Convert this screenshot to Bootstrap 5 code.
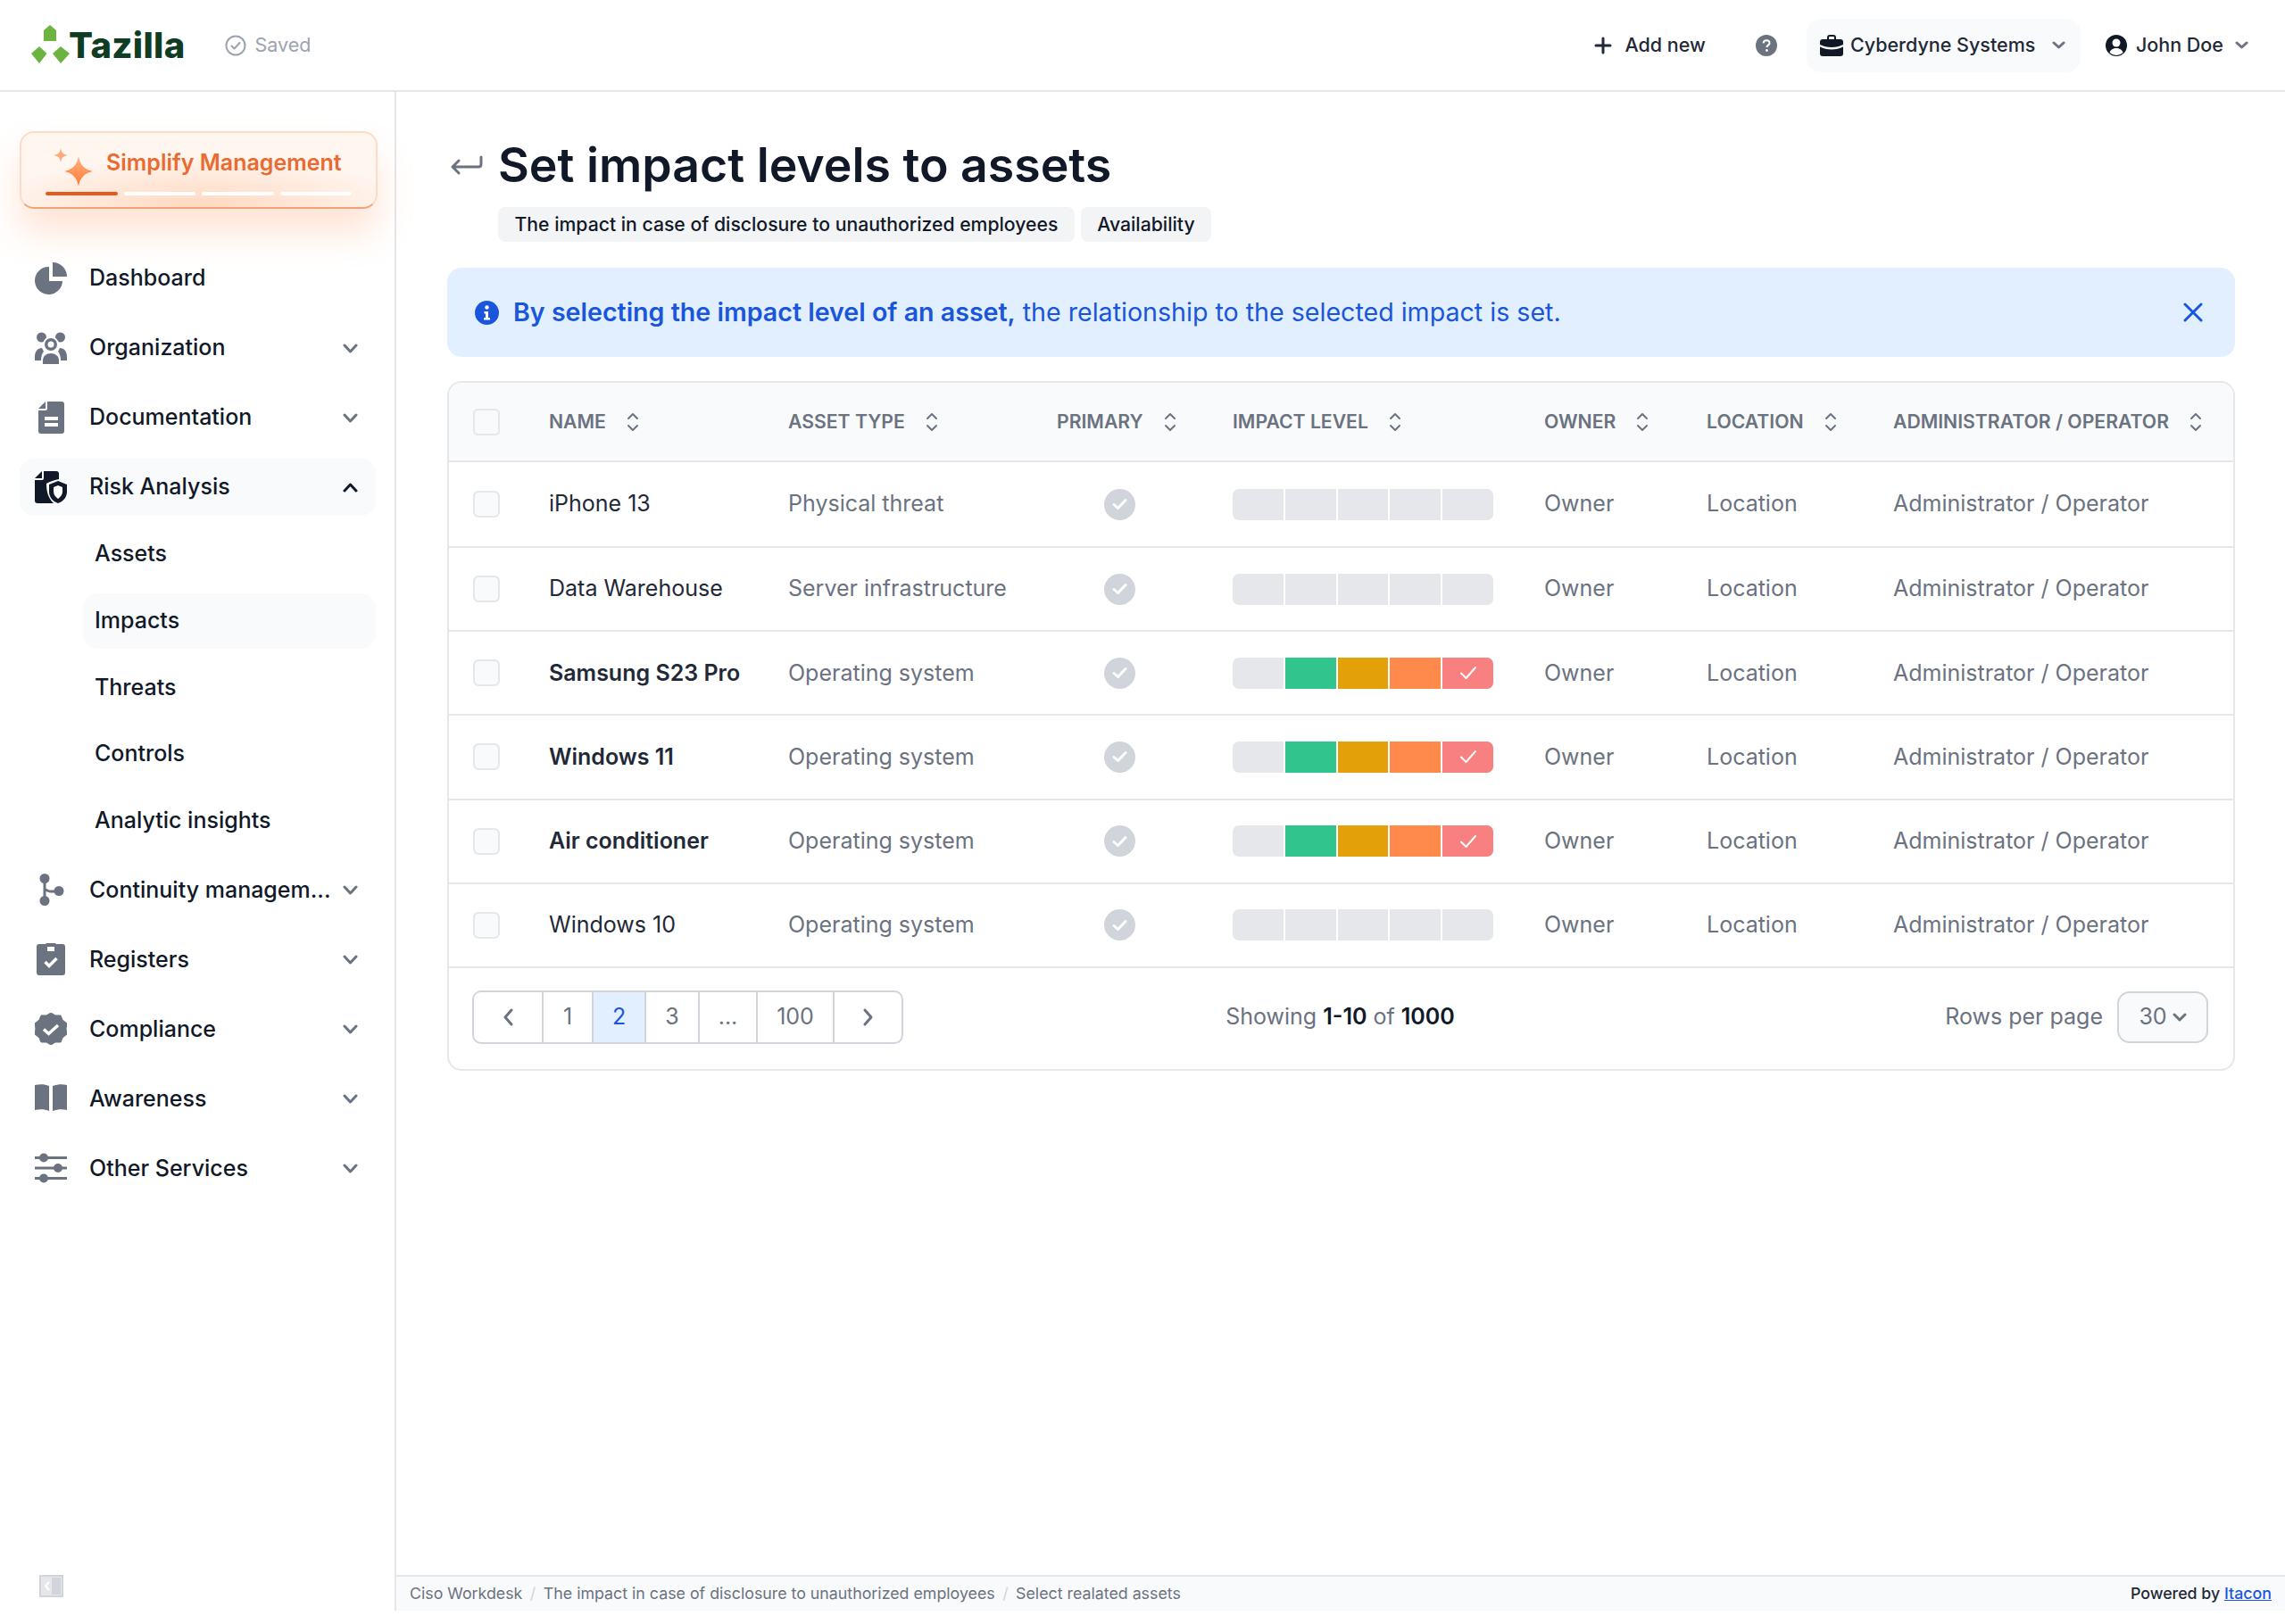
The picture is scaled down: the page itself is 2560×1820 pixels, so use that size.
<!DOCTYPE html>
<html lang="en">
<head>
    <meta charset="UTF-8">
    <meta name="viewport" content="width=device-width, initial-scale=1.0">
    <title>Set impact levels to assets</title>
    <link rel="stylesheet" href="https://cdn.jsdelivr.net/npm/bootstrap@5.3.0/dist/css/bootstrap.min.css">
    <style>
        html, body { background: #fff; }
        body { font-family: "Inter", "Liberation Sans", sans-serif; color: #111928; font-size: 25px; }
        .app-shell { height: 1805px; }

        /* top bar */
        .top-bar { height: 103px; border-bottom: 2px solid #e5e7eb; padding: 0 41px 0 35px; flex-shrink: 0; }
        .brand-logo { width: 43px; height: 43px; margin-bottom: 2px; }
        .brand-name { font-size: 40px; font-weight: 800; color: #0f3d24; letter-spacing: .3px; line-height: 1; margin-left: -1px; }
        .saved-state { color: #9ca3af; font-size: 21.5px; margin-left: 44px; gap: 10px; }
        .top-action { font-size: 21.5px; font-weight: 500; color: #1f2937; white-space: nowrap; }
        .add-plus { margin-right: 14px; }
        .company-pill { background: #f9fafb; border-radius: 16px; height: 60px; padding: 0 17px 0 15px; width: 307px; margin-left: 33px; }
        .user-menu { margin-left: 28px; }
        .user-name { margin-left: 10px; margin-right: 13px; }

        /* sidebar */
        .side-bar { width: 444px; flex-shrink: 0; border-right: 2px solid #e5e7eb; padding: 44px 21px 15px 22px; }
        .promo-box { height: 87px; border-radius: 16px; border: 2px solid #fbdcc8; border-bottom-color: #f0a47a; margin-right: -2px;
            background: radial-gradient(ellipse 60% 70% at 50% 100%, #ffd8c0 0%, rgba(255, 240, 230, 0) 100%), #fff6f0;
            box-shadow: 0 26px 40px rgba(255, 138, 76, .24); padding: 12px 27px 0; margin-bottom: 46px; flex-shrink: 0; }
        .promo-title { color: #ea6a2f; font-weight: 600; font-size: 25px; line-height: 38px; gap: 14px; padding-left: 8px; }
        .promo-title svg { margin-top: 4px; margin-bottom: -6px; }
        .promo-steps { gap: 7px; margin-top: 12px; }
        .promo-steps span { height: 4px; flex: 1; background: #fff; border-radius: 2px; }
        .promo-steps span.on { background: #e8591f; }
        .side-link { height: 64px; margin-bottom: 14px; padding: 0 20px 0 17px; border-radius: 16px; color: #111928; font-weight: 500; font-size: 25px; gap: 25px; flex-shrink: 0; }
        .side-link:hover, .side-link:focus { color: #111928; }
        .side-link.open { background: #f9fafb; margin-bottom: 12px; }
        .side-icon { width: 36px; height: 36px; flex-shrink: 0; fill: #6b7280; }
        .side-link.open .side-icon { fill: #111928; }
        .side-text { flex: 1; min-width: 0; white-space: nowrap; }
        .side-sub { margin-left: 71px; margin-bottom: 2px; }
        .side-sub a { height: 62px; margin-bottom: 12.7px; padding: 0 13px; border-radius: 16px; color: #111928; font-weight: 500; font-size: 25px; display: flex; align-items: center; text-decoration: none; }
        .side-sub a.current { background: #f9fafb; }
        .chev { stroke: #6b7280; fill: none; stroke-width: 3; stroke-linecap: round; stroke-linejoin: round; flex-shrink: 0; }

        /* page head */
        .page-body { padding: 52px 56px 0 57px; }
        .back-arrow { width: 36px; height: 24px; margin-top: 18px; margin-left: 4px; margin-right: 17px; }
        .page-title { font-size: 53.6px; font-weight: 600; line-height: 60px; color: #111928; margin: 0; }
        .tag-row { margin: 17px 0 29px 57px; gap: 7px; }
        .tag-chip { height: 39px; padding: 0 18.500px; border-radius: 8px; background: #f3f4f6; color: #111928; font-size: 21.2px; font-weight: 500; display: flex; align-items: center; }

        /* notice */
        .notice { height: 100px; background: #e1effe; border: 0; border-radius: 16px; color: #1a56db; font-size: 28.6px; margin-bottom: 27px; padding: 0 36px 0 31px; gap: 16px; }
        .notice b { font-weight: 600; }

        /* table */
        .asset-box { border: 2px solid #e5e7eb; border-radius: 16px; overflow: hidden; }
        .asset-table { table-layout: fixed; margin: 0; width: 2002px; --bs-table-color: #6b7280; }
        .asset-table th { height: 88px; background: #f9fafb; font-size: 21.2px; font-weight: 600; color: #6b7280; text-transform: uppercase; padding: 0 0 0 27px; vertical-align: middle; border-bottom: 2px solid #e5e7eb; white-space: nowrap; }
        .asset-table td { height: 94.2px; font-size: 25px; color: #6b7280; padding: 0 0 0 27px; vertical-align: middle; border-bottom: 2px solid #e5e7eb; }
        .asset-table tbody tr:first-child td { height: 96px; }
        .asset-table td.item-name { color: #1f2937; }
        .asset-table td.item-name.strong { font-weight: 600; }
        .sort-mark { width: 14px; height: 22px; margin-left: 23px; vertical-align: -4px; }
        .tick-box { width: 30px; height: 30px; margin: 0; background-color: #f9fafb; border: 2px solid #e5e7eb; border-radius: 6px; display: block; }
        .primary-dot { width: 35px; height: 35px; border-radius: 50%; background: #d1d5db; margin-left: 53px; }
        .level-bar { width: 292px; height: 35px; gap: 2px; border-radius: 7px; overflow: hidden; }
        .level-bar span { flex: 1; background: #e5e7eb; }
        .level-bar .lv-green { background: #31c48d; }
        .level-bar .lv-amber { background: #e3a008; }
        .level-bar .lv-orange { background: #ff8a4c; }
        .level-bar .lv-red { background: #f98080; }

        /* table foot */
        .table-foot { padding: 25px 28px 28px 26px; }
        .pager { margin: 0; }
        .pager .page-link { height: 60px; display: flex; align-items: center; justify-content: center; padding: 0; font-size: 25px; color: #6b7280; border: 2px solid #d1d5db; background: #fff; }
        .pager .page-item:not(:first-child) .page-link { margin-left: -2px; }
        .pager .page-item:first-child .page-link { border-radius: 10px 0 0 10px; margin-left: 0; }
        .pager .page-item:last-child .page-link { border-radius: 0 10px 10px 0; }
        .pager .page-item.active .page-link { background: #e1effe; color: #1a56db; }
        .foot-info { color: #6b7280; font-size: 25px; }
        .foot-info b { color: #111928; font-weight: 600; }
        .rows-select { width: 102px; height: 58px; border: 2px solid #d1d5db; border-radius: 14px; background: #f9fafb; color: #6b7280; font-size: 25px; gap: 6px; margin-left: 16px; }

        /* status line */
        .status-line { height: 40px; border-top: 2px solid #e5e7eb; background: #f9fafb; padding: 0 15px 0 15px; font-size: 17.8px; flex-shrink: 0; }
        .status-line .breadcrumb { --bs-breadcrumb-margin-bottom: 0; --bs-breadcrumb-divider-color: #d1d5db; --bs-breadcrumb-item-padding-x: 8.5px; color: #6b7280; }
        .status-line .breadcrumb-item { color: #6b7280; }
        .status-line .powered { color: #1f2937; font-weight: 500; }
        .status-line a { color: #1a56db; }
    </style>
</head>
<body>
<div class="app-shell d-flex flex-column">

    <!-- top bar -->
    <header class="top-bar d-flex align-items-center">
        <svg class="brand-logo" viewBox="0 0 43 43">
            <path fill="#6cb33f" d="M21 0l7 6v12h-14V6z M9 24l8.500 8-8.500 11-9-11z M33 24l10 8-10 11-9-11z"/>
        </svg>
        <span class="brand-name">Tazilla</span>
        <span class="saved-state d-flex align-items-center">
            <svg width="24" height="24" viewBox="0 0 24 24" fill="none" stroke="#9ca3af" stroke-width="2"><circle cx="12" cy="12" r="10.500"/><path d="M7.500 12.500l3 3 6-6.500" stroke-linecap="round" stroke-linejoin="round"/></svg>
            Saved
        </span>
        <div class="ms-auto d-flex align-items-center top-action">
            <svg class="add-plus" width="20" height="20" viewBox="0 0 20 20" stroke="#1f2937" stroke-width="3" stroke-linecap="round"><path d="M10 2v16M2 10h16"/></svg>
            <span class="me-5 pe-2">Add new</span>
            <svg width="24" height="24" viewBox="0 0 24 24"><circle cx="12" cy="12" r="12" fill="#6b7280"/><path d="M8.600 9.300c.2-2 1.700-3 3.500-3 1.900 0 3.400 1.100 3.400 2.900 0 2.400-3.100 2.500-3.100 4.900" fill="none" stroke="#fff" stroke-width="2"/><circle cx="12.400" cy="17.500" r="1.400" fill="#fff"/></svg>
            <div class="company-pill d-flex align-items-center">
                <svg width="26" height="24" viewBox="0 0 26 24" fill="#111928"><path d="M8 5V3a3 3 0 0 1 3-3h4a3 3 0 0 1 3 3v2h5a3 3 0 0 1 3 3v3c-4 2-8 3-13 3S4 13 0 11V8a3 3 0 0 1 3-3zM10 3v2h6V3a1 1 0 0 0-1-1h-4a1 1 0 0 0-1 1z"/><path d="M0 13.500c4 2 8 3 13 3s9-1 13-3V21a3 3 0 0 1-3 3H3a3 3 0 0 1-3-3z"/></svg>
                <span class="ms-2 flex-grow-1">Cyberdyne Systems</span>
                <svg class="chev" width="15" height="9" viewBox="0 0 15 9" stroke-width="2"><path d="M2 2l5.500 5L13 2"/></svg>
            </div>
            <div class="user-menu d-flex align-items-center">
                <svg width="24" height="24" viewBox="0 0 24 24"><circle cx="12" cy="12" r="12" fill="#111928"/><circle cx="12" cy="9" r="4.500" fill="#fff"/><path d="M4.500 20c1-3.500 4-5 7.500-5s6.500 1.500 7.500 5a11 11 0 0 1-15 0z" fill="#fff"/></svg>
                <span class="user-name">John Doe</span>
                <svg class="chev" width="15" height="9" viewBox="0 0 15 9" stroke-width="2"><path d="M2 2l5.500 5L13 2"/></svg>
            </div>
        </div>
    </header>

    <div class="d-flex flex-grow-1" style="min-height:0">
        <!-- sidebar -->
        <aside class="side-bar d-flex flex-column">
            <div class="promo-box">
                <div class="promo-title d-flex align-items-center">
                    <svg width="46" height="44" viewBox="0 0 46 44">
                        <defs><linearGradient id="promo-star" x1="0" y1="0" x2="0" y2="1"><stop offset="0" stop-color="#ffb183"/><stop offset="1" stop-color="#ff7a33"/></linearGradient></defs>
                        <path fill="url(#promo-star)" d="M29 10c1.500 9 6 15 16 17-10 2-14.500 8-16 17-1.500-9-6-15-16-17 10-2 14.500-8 16-17z"/>
                        <path fill="#fbab7c" d="M9 1c1 5 2 7 8 8-6 1-7 3-8 8-1-5-2-7-8-8 6-1 7-3 8-8z"/>
                    </svg>
                    <span>Simplify Management</span>
                </div>
                <div class="promo-steps d-flex"><span class="on"></span><span></span><span></span><span></span></div>
            </div>

            <nav class="nav flex-column flex-nowrap w-100">
                <a class="side-link nav-link d-flex align-items-center" href="#">
                    <svg class="side-icon" viewBox="0 0 36 36"><path d="M16 5A15.500 15.500 0 1 0 31 21H16z"/><path d="M20 0a16 16 0 0 1 16 16H20z"/></svg>
                    <span class="side-text">Dashboard</span>
                </a>
                <a class="side-link nav-link d-flex align-items-center" href="#">
                    <svg class="side-icon" viewBox="0 0 36 36"><circle cx="7.500" cy="6" r="5.500"/><circle cx="28.500" cy="6" r="5.500"/><circle cx="18" cy="14" r="8" stroke="#fff" stroke-width="2"/><circle cx="18" cy="14" r="3.500" fill="#fff"/><path d="M0 28c0-6 3-10 8-10l2 4c-2 2-3 6-3 10H0z"/><path d="M36 28c0-6-3-10-8-10l-2 4c2 2 3 6 3 10h7z"/><path d="M9 36v-4c0-5 4-8 9-8s9 3 9 8v4z"/></svg>
                    <span class="side-text">Organization</span>
                    <svg class="chev" width="17" height="11" viewBox="0 0 17 11"><path d="M2 2l6.500 7L15 2"/></svg>
                </a>
                <a class="side-link nav-link d-flex align-items-center" href="#">
                    <svg class="side-icon" viewBox="0 0 36 36"><path d="M4 8l8-8v8z"/><path d="M14 0h16a3 3 0 0 1 3 3v30a3 3 0 0 1-3 3H7a3 3 0 0 1-3-3V10h8a2 2 0 0 0 2-2z"/><rect x="11" y="17" width="15" height="4" fill="#fff"/><rect x="11" y="24" width="15" height="4" fill="#fff"/></svg>
                    <span class="side-text">Documentation</span>
                    <svg class="chev" width="17" height="11" viewBox="0 0 17 11"><path d="M2 2l6.500 7L15 2"/></svg>
                </a>
                <a class="side-link open nav-link d-flex align-items-center" href="#">
                    <svg class="side-icon" viewBox="0 0 36 36"><path d="M0 8l8-8v8z"/><path d="M10 0h14a3 3 0 0 1 3 3v6c-6 1-11 3-14 5 0 9 2 16 8 22H3a3 3 0 0 1-3-3V10h8a2 2 0 0 0 2-2z"/><path d="M26 11l10 4v8c0 6-4 11-10 13-6-2-10-7-10-13v-8z"/><path d="M26 16l5 2v5c0 3-2 6-5 8-3-2-5-5-5-8v-5z" fill="#fff"/></svg>
                    <span class="side-text">Risk Analysis</span>
                    <svg class="chev" width="17" height="11" viewBox="0 0 17 11" style="stroke:#111928"><path d="M2 9l6.500-7L15 9"/></svg>
                </a>
                <div class="side-sub">
                    <a href="#">Assets</a>
                    <a href="#" class="current">Impacts</a>
                    <a href="#">Threats</a>
                    <a href="#">Controls</a>
                    <a href="#">Analytic insights</a>
                </div>
                <a class="side-link nav-link d-flex align-items-center" href="#">
                    <svg class="side-icon" viewBox="0 0 36 36"><path d="M11 5v26M11 18c2 0 4 2 6 2h10" fill="none" stroke="#6b7280" stroke-width="3"/><circle cx="11" cy="5.500" r="5.500"/><circle cx="11" cy="30.500" r="5.500"/><circle cx="27" cy="19.500" r="5.500"/></svg>
                    <span class="side-text">Continuity managem...</span>
                    <svg class="chev" width="17" height="11" viewBox="0 0 17 11"><path d="M2 2l6.500 7L15 2"/></svg>
                </a>
                <a class="side-link nav-link d-flex align-items-center" href="#">
                    <svg class="side-icon" viewBox="0 0 36 36"><path d="M5 1h7a2 2 0 0 1 2-1h8a2 2 0 0 1 2 1h7a3 3 0 0 1 3 3v29a3 3 0 0 1-3 3H5a3 3 0 0 1-3-3V4a3 3 0 0 1 3-3z"/><rect x="14" y="4" width="8" height="5" fill="#fff"/><path d="M11.500 21l4.500 4.500 8.500-8.500" fill="none" stroke="#fff" stroke-width="3.500"/></svg>
                    <span class="side-text">Registers</span>
                    <svg class="chev" width="17" height="11" viewBox="0 0 17 11"><path d="M2 2l6.500 7L15 2"/></svg>
                </a>
                <a class="side-link nav-link d-flex align-items-center" href="#">
                    <svg class="side-icon" viewBox="0 0 36 36"><path d="M18 0l5 3 6 0 2 5 5 4-1 6 1 6-5 4-2 5-6 0-5 3-5-3-6 0-2-5-5-4 1-6-1-6 5-4 2-5 6 0z" stroke="#6b7280" stroke-width="1" stroke-linejoin="round"/><path d="M10 18.500l5.500 5L26 14" fill="none" stroke="#fff" stroke-width="3.500"/></svg>
                    <span class="side-text">Compliance</span>
                    <svg class="chev" width="17" height="11" viewBox="0 0 17 11"><path d="M2 2l6.500 7L15 2"/></svg>
                </a>
                <a class="side-link nav-link d-flex align-items-center" href="#">
                    <svg class="side-icon" viewBox="0 0 36 36"><path d="M0 3c6-1 11-1 16 1v28c-5-2-10-2-16-1z"/><path d="M36 3c-5-1-10-1-16 1v28c6-2 11-2 16-1z"/></svg>
                    <span class="side-text">Awareness</span>
                    <svg class="chev" width="17" height="11" viewBox="0 0 17 11"><path d="M2 2l6.500 7L15 2"/></svg>
                </a>
                <a class="side-link nav-link d-flex align-items-center" href="#">
                    <svg class="side-icon" viewBox="0 0 36 36"><rect y="5" width="36" height="3"/><rect y="16.500" width="36" height="3"/><rect y="28" width="36" height="3"/><circle cx="10" cy="6.500" r="5"/><circle cx="26" cy="18" r="5"/><circle cx="10" cy="29.500" r="5"/></svg>
                    <span class="side-text">Other Services</span>
                    <svg class="chev" width="17" height="11" viewBox="0 0 17 11"><path d="M2 2l6.500 7L15 2"/></svg>
                </a>
            </nav>

            <svg class="mt-auto flex-shrink-0" style="margin-left:22px" width="27" height="25" viewBox="0 0 27 25"><rect x="1" y="1" width="25" height="23" fill="#e5e7eb" stroke="#d1d5db" stroke-width="2"/><rect x="14" y="3" width="10" height="19" fill="#d1d5db"/><path d="M11 8l-4 4.500 4 4.500" fill="none" stroke="#fff" stroke-width="2"/></svg>
        </aside>

        <!-- main -->
        <main class="d-flex flex-column flex-grow-1" style="min-width:0">
            <div class="page-body flex-grow-1">
                <div class="d-flex align-items-start">
                    <svg class="back-arrow" viewBox="0 0 36 24" fill="none" stroke="#6b7280" stroke-width="3" stroke-linecap="round" stroke-linejoin="round"><path d="M34 3v8c0 2-1 3-3 3H3M9 7l-7 7 7 7"/></svg>
                    <h1 class="page-title">Set impact levels to assets</h1>
                </div>
                <div class="tag-row d-flex">
                    <span class="tag-chip">The impact in case of disclosure to unauthorized employees</span>
                    <span class="tag-chip">Availability</span>
                </div>

                <div class="notice alert d-flex align-items-center" role="alert">
                    <svg width="27" height="27" viewBox="0 0 27 27" class="flex-shrink-0"><circle cx="13.500" cy="13.500" r="13.500" fill="#1a56db"/><circle cx="13.500" cy="7.500" r="2.200" fill="#fff"/><path d="M10.500 12h4.500v7h2v2.500h-7V19h2v-4.500h-1.500z" fill="#fff"/></svg>
                    <div class="flex-grow-1"><b>By selecting the impact level of an asset,</b> the relationship to the selected impact is set.</div>
                    <svg width="22" height="22" viewBox="0 0 22 22" stroke="#1a56db" stroke-width="3" stroke-linecap="round"><path d="M2 2l18 18M20 2L2 20"/></svg>
                </div>

                <div class="asset-box">
                    <table class="table asset-table">
                        <colgroup>
                            <col style="width:85px"><col style="width:268px"><col style="width:301px"><col style="width:197px">
                            <col style="width:349px"><col style="width:182px"><col style="width:209px"><col style="width:411px">
                        </colgroup>
                        <thead><tr id="table-head"></tr></thead>
                        <tbody id="table-body"></tbody>
                    </table>
                    <div class="table-foot row g-0 align-items-center">
                        <div class="col-4">
                            <ul class="pagination pager" id="pager"></ul>
                        </div>
                        <div class="col-4 text-center foot-info">Showing <b>1-10</b> of <b>1000</b></div>
                        <div class="col-4 d-flex justify-content-end align-items-center foot-info">
                            Rows per page
                            <div class="rows-select d-flex align-items-center justify-content-center">
                                30
                                <svg class="chev" width="16" height="10" viewBox="0 0 16 10" stroke-width="4"><path d="M2 2l6 6 6-6"/></svg>
                            </div>
                        </div>
                    </div>
                </div>
            </div>

            <footer class="status-line d-flex align-items-center justify-content-between">
                <ol class="breadcrumb">
                    <li class="breadcrumb-item">Ciso Workdesk</li>
                    <li class="breadcrumb-item">The impact in case of disclosure to unauthorized employees</li>
                    <li class="breadcrumb-item">Select realated assets</li>
                </ol>
                <span class="powered">Powered by <a href="#">Itacon</a></span>
            </footer>
        </main>
    </div>
</div>

<script>
document.addEventListener("DOMContentLoaded", () => {
    const headers = ["Name", "Asset type", "Primary", "Impact level", "Owner", "Location", "Administrator / Operator"];
    const rows = [
        { name: "iPhone 13", type: "Physical threat", level: false },
        { name: "Data Warehouse", type: "Server infrastructure", level: false },
        { name: "Samsung S23 Pro", type: "Operating system", level: true },
        { name: "Windows 11", type: "Operating system", level: true },
        { name: "Air conditioner", type: "Operating system", level: true },
        { name: "Windows 10", type: "Operating system", level: false }
    ];
    const sortMark = `<svg class="sort-mark" viewBox="0 0 14 22" fill="none" stroke="#6b7280" stroke-width="2" stroke-linecap="round" stroke-linejoin="round"><path d="M2 7l5-5 5 5M2 15l5 5 5-5"/></svg>`;
    const boxMark = `<input class="form-check-input tick-box" type="checkbox">`;

    document.getElementById("table-head").innerHTML = `<th>${boxMark}</th>` +
        headers.map(h => `<th>${h}${sortMark}</th>`).join("");

    const levelBar = on => on
        ? `<span></span><span class="lv-green"></span><span class="lv-amber"></span><span class="lv-orange"></span>
           <span class="lv-red d-flex align-items-center justify-content-center"><svg width="22" height="18" viewBox="0 0 22 18" fill="none" stroke="#fff" stroke-width="2" stroke-linecap="round" stroke-linejoin="round"><path d="M3 9.500l5.500 5.500L19 3"/></svg></span>`
        : `<span></span><span></span><span></span><span></span><span></span>`;

    document.getElementById("table-body").innerHTML = rows.map(r => `
        <tr>
            <td>${boxMark}</td>
            <td class="item-name ${r.level ? "strong" : ""}">${r.name}</td>
            <td>${r.type}</td>
            <td><div class="primary-dot d-flex align-items-center justify-content-center"><svg width="17" height="14" viewBox="0 0 17 14" fill="none" stroke="#fff" stroke-width="3" stroke-linecap="round" stroke-linejoin="round"><path d="M2 7.500l4.500 4L15 2.500"/></svg></div></td>
            <td><div class="level-bar d-flex">${levelBar(r.level)}</div></td>
            <td>Owner</td>
            <td>Location</td>
            <td>Administrator / Operator</td>
        </tr>`).join("");

    const pages = [
        { w: 80, html: `<svg class="chev" width="13" height="22" viewBox="0 0 13 22" stroke-width="4"><path d="M10 3l-7 8 7 8"/></svg>` },
        { w: 58, html: "1" }, { w: 61, html: "2", active: true }, { w: 62, html: "3" },
        { w: 67, html: "..." }, { w: 88, html: "100" },
        { w: 79, html: `<svg class="chev" width="13" height="22" viewBox="0 0 13 22" stroke-width="4"><path d="M3 3l7 8-7 8"/></svg>` }
    ];
    document.getElementById("pager").innerHTML = pages.map(p => `
        <li class="page-item ${p.active ? "active" : ""}"><a class="page-link" href="#" style="width:${p.w}px">${p.html}</a></li>`).join("");
});
</script>
<script src="https://cdn.jsdelivr.net/npm/bootstrap@5.3.0/dist/js/bootstrap.bundle.min.js"></script>
</body>
</html>
